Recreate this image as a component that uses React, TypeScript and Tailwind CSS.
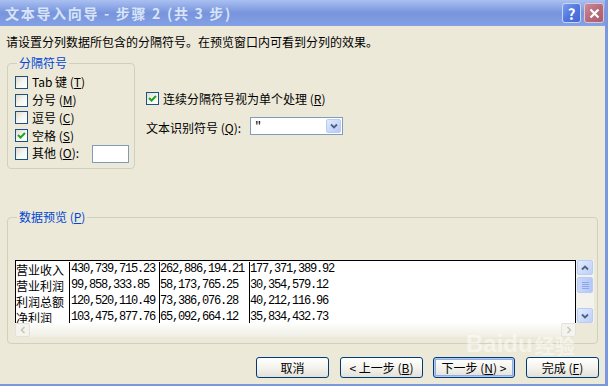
import React from 'react'

const cjk = "font-['Noto_Sans_CJK_SC','Noto_Sans',sans-serif]"
const mono = "font-['Liberation_Mono',monospace] tracking-[-1.2px]"

const U = ({ children }: { children: React.ReactNode }) => (
  <span className="underline underline-offset-[1px]">{children}</span>
)

const CheckBox = ({ checked }: { checked?: boolean }) => (
  <span className="flex h-[13px] w-[13px] shrink-0 items-center justify-center border border-[#1C5180] bg-gradient-to-br from-[#DCDBD5] via-[#F5F5F1] to-white">
    {checked && (
      <svg width="9" height="9" viewBox="0 0 9 9">
        <path d="M1 4 L3.5 6.5 L8 2" stroke="#21A121" strokeWidth="2" fill="none" />
      </svg>
    )}
  </span>
)

const Option = ({ checked, children }: { checked?: boolean; children: React.ReactNode }) => (
  <div className="flex h-[17.75px] items-center gap-[4px]">
    <CheckBox checked={checked} />
    <span className="leading-[14px] whitespace-nowrap">{children}</span>
  </div>
)

const XpButton = ({ children, isDefault, className }: { children: React.ReactNode; isDefault?: boolean; className?: string }) => (
  <button
    className={`flex h-[21px] items-center justify-center rounded-[3px] border border-[#003C74] bg-gradient-to-b from-white via-[#F4F3EE] to-[#E3E1D6] text-[12px] leading-[14px] text-black ${isDefault ? 'shadow-[inset_0_0_0_1px_#B4CAF4,inset_0_0_0_2px_#8FAEE8]' : ''} ${className ?? ''}`}
  >
    {children}
  </button>
)

const rows = [
  ['营业收入', '430,739,715.23', '262,886,194.21', '177,371,389.92'],
  ['营业利润', '99,858,333.85', '58,173,765.25', '30,354,579.12'],
  ['利润总额', '120,520,110.49', '73,386,076.28', '40,212,116.96'],
  ['净利润', '103,475,877.76', '65,092,664.12', '35,834,432.73'],
]

const ScrollArrow = ({ dir }: { dir: 'up' | 'down' }) => (
  <div className="flex h-[15px] w-[16px] items-center justify-center rounded-[2px] border border-[#B8CCF6] bg-gradient-to-br from-[#E2EBFE] to-[#BED0F8]">
    <svg width="8" height="6" viewBox="0 0 8 6">
      <path d={dir === 'up' ? 'M1 4.5 L4 1.5 L7 4.5' : 'M1 1.5 L4 4.5 L7 1.5'} stroke="#4D6185" strokeWidth="1.8" fill="none" />
    </svg>
  </div>
)

export default function App() {
  return (
    <div className={`relative flex h-[386px] w-[608px] flex-col overflow-hidden border-r-[3px] border-b-[2px] border-[#7B97E0] bg-[#ECE9D8] text-[12px] text-black ${cjk}`}>
      {/* title bar */}
      <div className="flex h-[26px] shrink-0 items-center justify-between bg-gradient-to-b from-[#A9C0F0] via-[#7894DC] to-[#84A1E6] pl-[5px] pr-[1px]">
        <span className="text-[14px] font-bold leading-[16px] tracking-[1.7px] text-[#D8E4F8] whitespace-nowrap">
          文本导入向导 - 步骤 2 (共 3 步)
        </span>
        <div className="flex gap-[3px]">
          <div className="flex h-[20px] w-[19px] items-center justify-center rounded-[3px] border border-[#C8D6F6] bg-gradient-to-br from-[#7D9CEA] via-[#5177E0] to-[#4466D4] text-[15px] font-bold leading-none text-white">
            ?
          </div>
          <div className="flex h-[20px] w-[20px] items-center justify-center rounded-[3px] border border-[#E2C4CB] bg-gradient-to-br from-[#CB8A97] via-[#B66C7C] to-[#A85E6F]">
            <svg width="11" height="11" viewBox="0 0 11 11">
              <path d="M1.5 1.5 L9.5 9.5 M9.5 1.5 L1.5 9.5" stroke="white" strokeWidth="2.2" />
            </svg>
          </div>
        </div>
      </div>

      {/* instruction */}
      <div className="mt-[8px] h-[16px] pl-[6px] leading-[16px] whitespace-nowrap">
        请设置分列数据所包含的分隔符号。在预览窗口内可看到分列的效果。
      </div>

      {/* delimiters */}
      <div className="mt-[6px] flex">
        <fieldset className="ml-[7px] h-[113px] w-[128px] rounded-[4px] border border-[#D0D0BF] pl-[7px] pt-[3.5px]">
          <legend className="ml-[2px] px-[2px] leading-[14px] text-[#0046D5]">分隔符号</legend>
          <Option>
            Tab 键 (<U>T</U>)
          </Option>
          <Option>
            分号 (<U>M</U>)
          </Option>
          <Option>
            逗号 (<U>C</U>)
          </Option>
          <Option checked>
            空格 (<U>S</U>)
          </Option>
          <div className="flex h-[17.75px] items-center">
            <CheckBox />
            <span className="ml-[4px] w-[60px] leading-[14px] whitespace-nowrap">
              其他 (<U>O</U>):
            </span>
            <span className="mt-[2px] h-[18px] w-[37px] border border-[#7F9DB9] bg-white" />
          </div>
        </fieldset>

        <div className="ml-[11px] flex flex-col pt-[36px]">
          <div className="flex h-[13px] items-center gap-[4px]">
            <CheckBox checked />
            <span className="leading-[14px] whitespace-nowrap">
              连续分隔符号视为单个处理 (<U>R</U>)
            </span>
          </div>
          <div className="mt-[12px] flex h-[18px] items-center">
            <span className="mt-[3px] w-[104px] leading-[14px] whitespace-nowrap">
              文本识别符号 (<U>Q</U>):
            </span>
            <div className="flex h-[18px] w-[93px] items-stretch border border-[#7F9DB9] bg-white">
              <span className="flex-1 pl-[4px] text-[13px] leading-[16px]">"</span>
              <div className="m-[1px] flex w-[15px] items-center justify-center rounded-[2px] border border-[#B8CCF6] bg-gradient-to-br from-[#E2EBFE] to-[#B5C9F6]">
                <svg width="8" height="6" viewBox="0 0 8 6">
                  <path d="M1 1.5 L4 4.5 L7 1.5" stroke="#4D6185" strokeWidth="1.8" fill="none" />
                </svg>
              </div>
            </div>
          </div>
        </div>
      </div>

      {/* data preview */}
      <fieldset className="ml-[7px] mt-[41px] h-[134px] w-[591px] rounded-[4px] border border-[#D0D0BF] pl-[7px]">
        <legend className="ml-[2px] px-[2px] leading-[14px] text-[#0046D5]">
          数据预览 (<U>P</U>)
        </legend>
        <div className="mt-[36px] flex w-[579px] flex-col">
          <div className="flex h-[63px]">
            <div className="flex flex-1 overflow-hidden border-x border-t border-black bg-white pt-[1px]">
              <div className="flex w-[54px] flex-col border-r border-black">
                {rows.map((r) => (
                  <div key={r[0]} className="h-[16px] shrink-0 leading-[15px] whitespace-nowrap">{r[0]}</div>
                ))}
              </div>
              <div className="flex w-[90px] flex-col border-r border-black pl-[1px]">
                {rows.map((r) => (
                  <div key={r[0]} className={`h-[16px] shrink-0 leading-[15px] whitespace-nowrap ${mono}`}>{r[1]}</div>
                ))}
              </div>
              <div className="flex w-[90px] flex-col border-r border-black">
                {rows.map((r) => (
                  <div key={r[0]} className={`h-[16px] shrink-0 leading-[15px] whitespace-nowrap ${mono}`}>{r[2]}</div>
                ))}
              </div>
              <div className="flex flex-1 flex-col">
                {rows.map((r) => (
                  <div key={r[0]} className={`h-[16px] shrink-0 leading-[15px] whitespace-nowrap ${mono}`}>{r[3]}</div>
                ))}
              </div>
            </div>
            <div className="flex w-[18px] flex-col bg-[#F3F2EC] pl-[1px]">
              <ScrollArrow dir="up" />
              <div className="mt-[2px] flex h-[16px] w-[16px] flex-col items-center justify-center gap-[1px] rounded-[2px] border border-[#B8CCF6] bg-gradient-to-r from-[#C9D8FC] to-[#B4C8F6]">
                <span className="h-[1px] w-[7px] bg-[#8CA8EA]" />
                <span className="h-[1px] w-[7px] bg-[#8CA8EA]" />
                <span className="h-[1px] w-[7px] bg-[#8CA8EA]" />
                <span className="h-[1px] w-[7px] bg-[#8CA8EA]" />
              </div>
              <div className="flex-1" />
              <ScrollArrow dir="down" />
            </div>
          </div>
          <div className="flex h-[14px]">
            <div className="flex flex-1 items-center justify-between bg-gradient-to-b from-[#FEFEFB] to-[#EFEEE6]">
              <div className="flex h-[14px] w-[15px] items-center justify-center rounded-[2px] border border-[#E2E1DA] bg-[#F4F3EE]">
                <svg width="6" height="8" viewBox="0 0 6 8">
                  <path d="M4.5 1 L1.5 4 L4.5 7" stroke="#C9C7BA" strokeWidth="1.6" fill="none" />
                </svg>
              </div>
              <div className="flex h-[14px] w-[15px] items-center justify-center rounded-[2px] border border-[#E2E1DA] bg-[#F4F3EE]">
                <svg width="6" height="8" viewBox="0 0 6 8">
                  <path d="M1.5 1 L4.5 4 L1.5 7" stroke="#C9C7BA" strokeWidth="1.6" fill="none" />
                </svg>
              </div>
            </div>
            <div className="w-[18px]" />
          </div>
        </div>
      </fieldset>

      {/* buttons */}
      <div className="mt-[13px] flex justify-end pr-[6px]">
        <XpButton className="w-[73px]">取消</XpButton>
        <XpButton className="ml-[11px] w-[83px]">
          &lt; 上一步 (<U>B</U>)
        </XpButton>
        <XpButton isDefault className="ml-[10px] w-[82px]">
          下一步 (<U>N</U>) &gt;
        </XpButton>
        <XpButton className="ml-[11px] w-[73px]">
          完成 (<U>F</U>)
        </XpButton>
      </div>

      {/* watermark */}
      <div className="pointer-events-none absolute left-[466px] top-[332px] flex items-end gap-[2px] text-white opacity-50">
        <span className="font-['Liberation_Sans',sans-serif] text-[24px] font-bold leading-none">Baidu</span>
        <span className="text-[20px] font-bold leading-none">经验</span>
      </div>
    </div>
  )
}
